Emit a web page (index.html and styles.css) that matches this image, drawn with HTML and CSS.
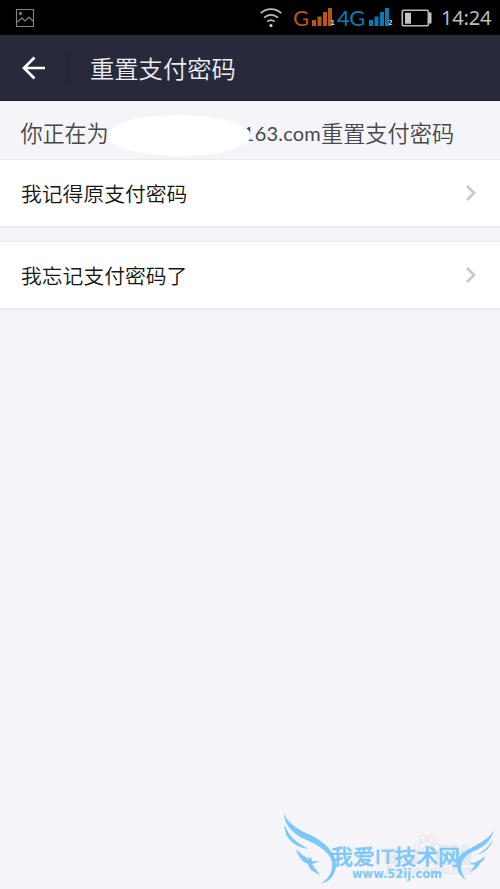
FILE: index.html
```html
<!DOCTYPE html>
<html lang="zh-CN">
<head>
<meta charset="utf-8">
<title>重置支付密码</title>
<link rel="stylesheet" href="styles.css">
</head>
<body>
<div class="status">
  <svg class="picture" width="20" height="20" viewBox="0 0 20 20" fill="none" stroke="#858585"><path d="M1.5 1.5h17v17h-17zM2 14l5-4 3 3 4-4 4 4" stroke-width="1.1"/><circle cx="5.5" cy="5.5" r="1.2" fill="#858585"/></svg>
  <svg class="wifi" width="22" height="20" viewBox="0 0 22 20" fill="none" stroke="#bcbcbc" stroke-width="1.6"><path d="M.7 5.2C6.5-.2 15.500-.2 21.300 5.200M4 9.600c4-3.700 10-3.700 14 0M7.300 13.700c2.200-1.900 5.200-1.900 7.400 0"/><circle cx="11" cy="17.600" r="1.500" fill="#ddd" stroke="none"/></svg>
  <span class="net orange">G</span>
  <svg class="bars" width="24" height="20" viewBox="0 0 24 20"><path fill="#b95614" d="M0 14h4v6H0zM5.500 10.500h4V20h-4zM11 6h4v14h-4zM16 2h4v18h-4z"/><text x="18.700" y="18.500" class="sim">1</text></svg>
  <span class="net blue">4G</span>
  <svg class="bars" width="24" height="20" viewBox="0 0 24 20"><path fill="#087bb5" d="M0 14h4v6H0zM5.500 10.500h4V20h-4zM11 6h4v14h-4zM16 2h4v18h-4z"/><text x="19.500" y="18.500" class="sim">2</text></svg>
  <svg class="battery" width="31" height="18" viewBox="0 0 31 18"><rect x="1.300" y="1.300" width="26" height="15.500" rx="1" fill="none" stroke="#bcbcbc" stroke-width="1.600"/><path fill="#c4c4c4" d="M4 3.700h6v11H4zM28 3.500h2.500v11H28z"/></svg>
  <span class="clock">14:24</span>
</div>
<header class="header">
  <svg class="back" width="24" height="24" viewBox="0 0 24 24" fill="none" stroke="#fff" stroke-width="2.700"><path d="M12.500 1.500 2 12l10.500 10.500M2.500 12H23"/></svg>
  <span class="divider"></span>
  <h1>重置支付密码</h1>
</header>
<main>
  <p class="hint"><span class="prefix">你正在为</span><span class="account"><span class="mask"></span>163.com</span><span>重置支付密码</span></p>
  <a class="row"><span>我记得原支付密码</span><svg width="12" height="18" viewBox="0 0 12 18"><path d="m2 2 7 7-7 7"/></svg></a>
  <a class="row"><span>我忘记支付密码了</span><svg width="12" height="18" viewBox="0 0 12 18"><path d="m2 2 7 7-7 7"/></svg></a>
</main>
<svg class="watermark" width="230" height="89" viewBox="270 800 230 89">
  <g class="faint">
    <text x="384" y="863" font-size="20" textLength="88" lengthAdjust="spacingAndGlyphs">Bai 经验</text>
    <text x="386" y="874" font-size="10" textLength="86" lengthAdjust="spacingAndGlyphs" class="small">jingyan.baidu.com</text>
    <ellipse cx="417" cy="847" rx="3" ry="4"/><ellipse cx="423" cy="839" rx="3.500" ry="4"/><ellipse cx="431.500" cy="839" rx="3.500" ry="4"/><ellipse cx="437" cy="847" rx="3" ry="4"/>
    <path d="M427 846q3 0 5 5 7 4 4 9-3 3-9 1-6 2-9-1-3-5 4-9 2-5 5-5z"/>
  </g>
  <g class="wings">
    <path d="M284 812.500C286 822 296 828 307 833.500C323 840 337 853 336 866C335 876 329 882 321 883.500C329 878 333 872 332 863C331 851 314 843 302 838C291 832 284 824 284 812.500z"/>
    <path d="M284.500 824.500C289 837 297 843 309 849C294 847 284 838 284.500 824.500z"/>
    <path d="M296 849C301 854 305 857 309 859L311 856.500L312 861L319.500 861.500L312 864L320 875C314 872 309 870 308 864C301 861 298 856 296 849z"/>
    <path d="M494 830C491 841 484 847 474 851C461 857 457 867 466 880C454 872 454 859 464 852C475 845 488 841 494 830z"/>
    <path d="M493 838.500C491 847 485 853 476 855C484 851 489 847 493 838.500z"/>
    <path d="M485 856C481 860 477 862 469 864L475 865L470 872C477 869 479 866 480 863C483 861 485 859 485 856z"/>
    <text x="331" y="864" font-size="21" textLength="129" lengthAdjust="spacingAndGlyphs" class="brand">我爱IT技术网</text>
    <text x="352" y="878" font-size="12.500" textLength="90" lengthAdjust="spacingAndGlyphs" class="url">www.52ij.com</text>
  </g>
</svg>
</body>
</html>
```
FILE: styles.css
```css
* { box-sizing: border-box; }
body {
  margin: 0;
  height: 889px;
  position: relative;
  overflow: hidden;
  background: #f4f4f9;
  font-family: Lato, "Noto Sans CJK SC", sans-serif;
  font-weight: 400;
}
svg { flex: none; display: block; }
.status { display: flex; align-items: center; height: 35px; background: #000; padding: 0 9px 0 15px; }
.picture { margin-right: auto; }
.wifi { margin-right: 11px; }
.net { font: 400 22px/35px Lato, sans-serif; }
.orange { color: #b95614; width: 18px; }
.blue { color: #087bb5; width: 32px; letter-spacing: -.5px; margin-left: 1px; padding-left: 1px; }
.bars { margin-top: -3px; position: relative; left: 1px; }
.sim { font: 700 7px "Liberation Sans", sans-serif; fill: #ddd; }
.battery { margin-left: 9px; margin-right: 9px; }
.clock { width: 50px; font: 400 20px/35px "Noto Sans", sans-serif; color: #bebebe; white-space: nowrap; letter-spacing: -.2px; }
.header { display: flex; align-items: center; height: 66px; background: #282a3b; border-bottom: 1px solid #1c1e31; padding-left: 22px; }
.divider { width: 1px; height: 33px; margin: 0 22px 0 21px; background: #202233; }
h1 { margin: 0; color: #ededf1; font-size: 24.300px; font-weight: 350; line-height: 66px; padding-top: 2px; }
.hint { display: flex; align-items: center; margin: 0; height: 58px; padding: 7px 0 0 20.500px; color: #484848; font-size: 22.200px; font-weight: 350; line-height: 50px; white-space: nowrap; }
.prefix { letter-spacing: -.2px; }
.account { position: relative; width: 212.500px; text-align: right; font-size: 20px; font-weight: 400; letter-spacing: .2px; top: -1px; }
.mask { position: absolute; left: -1px; top: 7px; width: 144px; height: 41px; border-radius: 50%; background: #fff; }
.row { display: flex; align-items: center; justify-content: space-between; height: 69px; margin-bottom: 13px; padding: 0 23px 0 21px; border: solid #ececef; border-width: 1px 0 2px; background: #fff; color: #151515; font-size: 20.800px; font-weight: 350; }
.row path { fill: none; stroke: #c8c8c8; stroke-width: 2.700; }
.watermark { position: absolute; right: 0; bottom: 0; }
.faint { fill: #f4f4f7; stroke: #e0e0e4; stroke-width: .9; font-family: "Liberation Sans", "Noto Sans CJK SC", sans-serif; font-weight: 700; }
.small { stroke-width: .4; }
.wings { fill: #7cc8fb; }
.brand { font-family: "Liberation Sans", "Noto Sans CJK SC", sans-serif; font-weight: 500; stroke: #7cc8fb; stroke-width: .4; }
.url { font-family: "DejaVu Sans", sans-serif; font-weight: 700; }
```
